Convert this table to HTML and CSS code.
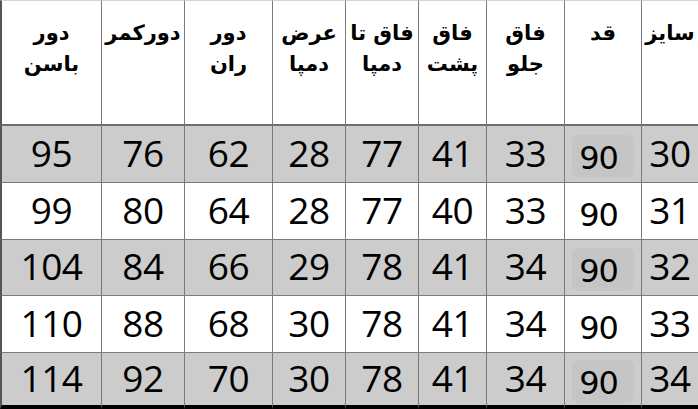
FILE: index.html
```html
<!DOCTYPE html>
<html lang="fa">
<head>
<meta charset="utf-8">
<title>جدول سایز</title>
<link rel="stylesheet" href="styles.css">
</head>
<body>
<div class="sheet" dir="rtl" role="table">
  <div class="cell head">سایز</div>
  <div class="cell head">قد</div>
  <div class="cell head">فاق<br>جلو</div>
  <div class="cell head">فاق<br>پشت</div>
  <div class="cell head">فاق تا<br>دمپا</div>
  <div class="cell head">عرض<br>دمپا</div>
  <div class="cell head">دور<br>ران</div>
  <div class="cell head">دورکمر</div>
  <div class="cell head edge">دور<br>باسن</div>

  <div class="cell num grey">30</div>
  <div class="cell num grey"><span class="qad blob">90</span></div>
  <div class="cell num grey">33</div>
  <div class="cell num grey">41</div>
  <div class="cell num grey">77</div>
  <div class="cell num grey">28</div>
  <div class="cell num grey">62</div>
  <div class="cell num grey">76</div>
  <div class="cell num grey edge">95</div>

  <div class="cell num">31</div>
  <div class="cell num"><span class="qad">90</span></div>
  <div class="cell num">33</div>
  <div class="cell num">40</div>
  <div class="cell num">77</div>
  <div class="cell num">28</div>
  <div class="cell num">64</div>
  <div class="cell num">80</div>
  <div class="cell num edge">99</div>

  <div class="cell num grey">32</div>
  <div class="cell num grey"><span class="qad blob">90</span></div>
  <div class="cell num grey">34</div>
  <div class="cell num grey">41</div>
  <div class="cell num grey">78</div>
  <div class="cell num grey">29</div>
  <div class="cell num grey">66</div>
  <div class="cell num grey">84</div>
  <div class="cell num grey edge">104</div>

  <div class="cell num">33</div>
  <div class="cell num"><span class="qad">90</span></div>
  <div class="cell num">34</div>
  <div class="cell num">41</div>
  <div class="cell num">78</div>
  <div class="cell num">30</div>
  <div class="cell num">68</div>
  <div class="cell num">88</div>
  <div class="cell num edge">110</div>

  <div class="cell num grey last">34</div>
  <div class="cell num grey last"><span class="qad blob">90</span></div>
  <div class="cell num grey last">34</div>
  <div class="cell num grey last">41</div>
  <div class="cell num grey last">78</div>
  <div class="cell num grey last">30</div>
  <div class="cell num grey last">70</div>
  <div class="cell num grey last">92</div>
  <div class="cell num grey last edge">114</div>
</div>
</body>
</html>
```

FILE: styles.css
```css
* { box-sizing: border-box; }
html, body { margin: 0; padding: 0; background: #fff; }

.sheet {
  width: 698px;
  height: 409px;
  display: grid;
  grid-template-columns: 57px 77px 78px 68px 73px 73px 88px 83px 101px;
  grid-template-rows: 126px 57px 57px 56px 57px 56px;
  overflow: hidden;
}

.cell {
  border-left: 1px solid #7a7a7a;
  border-bottom: 1px solid #7a7a7a;
  display: flex;
  justify-content: center;
  color: #000;
}
.cell.edge { border-left: 2px solid #555; }

.head {
  border-top: 1px solid #d4d4d4;
  border-bottom: 2px solid #6e6e6e;
  align-items: flex-start;
  padding-top: 17px;
  font-family: "DejaVu Sans", sans-serif;
  font-weight: bold;
  font-size: 21px;
  line-height: 31px;
  text-align: center;
  white-space: nowrap;
}

.num {
  align-items: center;
  font-family: "Open Sans", "Noto Sans", sans-serif;
  font-size: 37px;
  letter-spacing: -0.5px;
  line-height: 1;
  padding-bottom: 4px;
}
.grey { background: #cccccc; }
.last { border-bottom: 4px solid #000; }

.num .qad {
  font-family: "DejaVu Sans", "Liberation Sans", sans-serif;
  font-size: 32px;
  letter-spacing: -1px;
  padding: 7px 16px 4px 7px;
  margin-top: 8px;
  border-radius: 7px;
}
.num .blob { background: #c5c5c5; }
```
